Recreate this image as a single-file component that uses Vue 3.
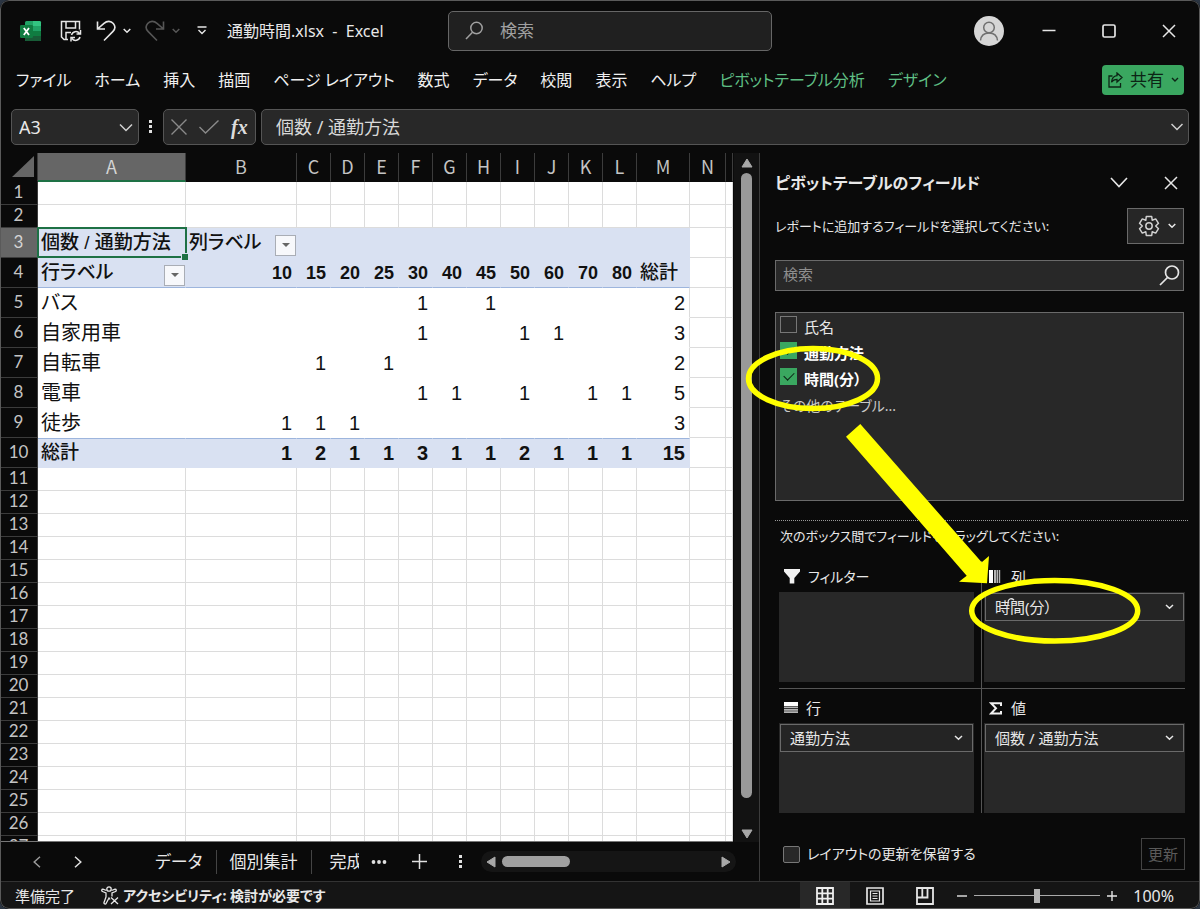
<script setup>
const tabs = [
  'ファイル', 'ホーム', '挿入', '描画', 'ページ レイアウト', '数式', 'データ', '校閲', '表示', 'ヘルプ',
]
const contextTabs = ['ピボットテーブル分析', 'デザイン']

const columns = ['A', 'B', 'C', 'D', 'E', 'F', 'G', 'H', 'I', 'J', 'K', 'L', 'M', 'N']

const minutes = [10, 15, 20, 25, 30, 40, 45, 50, 60, 70, 80]
const records = [
  { row: 5, name: 'バス', counts: { 30: 1, 45: 1 }, total: 2 },
  { row: 6, name: '自家用車', counts: { 30: 1, 50: 1, 60: 1 }, total: 3 },
  { row: 7, name: '自転車', counts: { 15: 1, 25: 1 }, total: 2 },
  { row: 8, name: '電車', counts: { 30: 1, 40: 1, 50: 1, 70: 1, 80: 1 }, total: 5 },
  { row: 9, name: '徒歩', counts: { 10: 1, 15: 1, 20: 1 }, total: 3 },
]
const totals = [1, 2, 1, 1, 3, 1, 1, 2, 1, 1, 1]
const emptyRows = Array.from({ length: 17 }, (_, i) => i + 11)

const fields = [
  { name: '氏名', on: false },
  { name: '通勤方法', on: true },
  { name: '時間(分）', on: true },
]
</script>

<template>
  <div class="window">
    <header class="titlebar">
      <div class="quick">
        <svg class="logo" width="22" height="22" viewBox="0 0 22 22">
          <rect x="5" y="1" width="16" height="20" rx="1.5" fill="#21a366" />
          <path d="M13 1h6.500a1.500 1.500 0 0 1 1.500 1.500V6h-8z" fill="#33c481" />
          <path d="M5 11h8v5H5z" fill="#185c37" />
          <path d="M13 11h8v5h-8z" fill="#107c41" />
          <path d="M5 16h16v3.500a1.500 1.500 0 0 1-1.500 1.500h-13A1.500 1.500 0 0 1 5 19.500z" fill="#185c37" />
          <rect x="0" y="5" width="13" height="13" rx="1.300" fill="#107c41" />
          <path d="M3.800 8l5.200 7M9 8l-5.200 7" stroke="#fff" stroke-width="1.800" />
        </svg>
        <button class="icon-btn save" aria-label="上書き保存">
          <svg width="22" height="22" viewBox="0 0 22 22" fill="none" stroke="#e6e6e6" stroke-width="1.500">
            <path d="M8 19.500H4L1.500 17V1.500h18v8M6 1.500v6.500h9.500V1.500M6 19v-6.500h5" />
            <path d="M11.500 15a4.500 4.500 0 0 1 8-1.500M20.500 10v4h-4M20 17a4.500 4.500 0 0 1-8 1.500M11 21.500v-4h4" />
          </svg>
        </button>
        <button class="icon-btn undo" aria-label="元に戻す">
          <svg width="20" height="22" viewBox="0 0 20 22" fill="none" stroke="#e6e6e6" stroke-width="1.600">
            <path d="M1.500 1.500v7.500h7.500M1.500 9L8 3.300C11 .7 15 .8 17.300 3.500c2 2.400 2 5.500-.3 7.900L8 20.500" />
          </svg>
          <svg width="8" height="6" viewBox="0 0 8 6" fill="none" stroke="#e6e6e6" stroke-width="1.500"><path d="M.700 1L4 4.300 7.300 1" /></svg>
        </button>
        <button class="icon-btn redo" aria-label="やり直し">
          <svg width="20" height="22" viewBox="0 0 20 22" fill="none" stroke="#565656" stroke-width="1.600">
            <path d="M18.500 1.500v7.500H11M18.500 9L12 3.300C9 .7 5 .8 2.700 3.500c-2 2.400-2 5.500.3 7.900L12 20.500" />
          </svg>
          <svg width="8" height="6" viewBox="0 0 8 6" fill="none" stroke="#565656" stroke-width="1.500"><path d="M.700 1L4 4.300 7.300 1" /></svg>
        </button>
        <button class="icon-btn" aria-label="クイック アクセス ツール バーのユーザー設定">
          <svg width="10" height="9" viewBox="0 0 10 9" fill="none" stroke="#e6e6e6" stroke-width="1.400"><path d="M.500 1h9M1.500 4L5 7.500 8.500 4" /></svg>
        </button>
        <span class="doc">通勤時間.xlsx&nbsp; -&nbsp; Excel</span>
      </div>
      <label class="search">
        <svg width="19" height="19" viewBox="0 0 19 19" fill="none" stroke="#a0a0a0" stroke-width="1.500"><circle cx="11.500" cy="7" r="5.700" /><path d="M7.500 11.300L1 18" /></svg>
        <input type="text" placeholder="検索" aria-label="検索" />
      </label>
      <div class="caption">
        <button class="icon-btn" aria-label="アカウント">
          <svg width="30" height="30" viewBox="0 0 30 30"><circle cx="15" cy="15" r="15" fill="#d6d6d6" /><g fill="none" stroke="#707070" stroke-width="1.500"><circle cx="15" cy="11.500" r="5.300" /><path d="M6.500 24.500c.5-5 4-7.500 8.500-7.500s8 2.500 8.500 7.500" /></g></svg>
        </button>
        <button class="icon-btn" aria-label="最小化"><svg width="14" height="14" viewBox="0 0 14 14"><path d="M.500 6.500h13" stroke="#e6e6e6" stroke-width="1.500" /></svg></button>
        <button class="icon-btn" aria-label="最大化"><svg width="14" height="14" viewBox="0 0 14 14"><rect x="1" y="1" width="12" height="12" rx="1.500" fill="none" stroke="#e6e6e6" stroke-width="1.700" /></svg></button>
        <button class="icon-btn" aria-label="閉じる"><svg width="14" height="14" viewBox="0 0 14 14"><path d="M1 1l12 12M13 1L1 13" stroke="#e6e6e6" stroke-width="1.500" /></svg></button>
      </div>
    </header>

    <nav class="ribbon">
      <button v-for="t in tabs" :key="t" class="tab">{{ t }}</button>
      <button v-for="t in contextTabs" :key="t" class="tab context">{{ t }}</button>
      <button class="share">
        <svg width="15" height="16" viewBox="0 0 15 16" fill="none" stroke="#0c2415" stroke-width="1.300"><path d="M4.500 4H1v11h11.500v-4M9 1l5 4.500L9 10V7.300c-2.500 0-4.200.7-5.500 3 .3-4 2.300-6.200 5.500-6.600z" /></svg>
        <span>共有</span>
        <svg width="8" height="6" viewBox="0 0 8 6" fill="none" stroke="#0c2415" stroke-width="1.400"><path d="M1 1l3 3 3-3" /></svg>
      </button>
    </nav>

    <div class="formula-row">
      <div class="field namebox">
        <input type="text" value="A3" aria-label="名前ボックス" />
        <button class="icon-btn" aria-label="名前の一覧"><svg width="14" height="9" viewBox="0 0 14 9" fill="none" stroke="#d0d0d0" stroke-width="1.500"><path d="M1 1.500l6 6 6-6" /></svg></button>
      </div>
      <svg class="grip" width="4" height="14" viewBox="0 0 4 14" fill="#e0e0e0"><path d="M0 0h3v3H0zM0 5h3v3H0zM0 10h3v3H0z" /></svg>
      <div class="field fx">
        <button class="icon-btn" aria-label="キャンセル"><svg width="16" height="16" viewBox="0 0 16 16"><path d="M.500.500l15 15M15.500.500l-15 15" stroke="#8a8a8a" stroke-width="1.400" /></svg></button>
        <button class="icon-btn" aria-label="入力"><svg width="20" height="14" viewBox="0 0 20 14"><path d="M.500 7l6 6L19.500.500" fill="none" stroke="#8a8a8a" stroke-width="1.400" /></svg></button>
        <button class="icon-btn fx-label" aria-label="関数の挿入">fx</button>
      </div>
      <div class="field formula">
        <input type="text" value="個数 / 通勤方法" aria-label="数式バー" />
        <button class="icon-btn" aria-label="数式バーの展開"><svg width="12" height="8" viewBox="0 0 12 8" fill="none" stroke="#d0d0d0" stroke-width="1.500"><path d="M.500 1L6 6.500 11.500 1" /></svg></button>
      </div>
    </div>

    <div class="body">
      <main class="sheet">
        <div class="sheet-view">
          <div class="grid-wrap">
            <table class="grid">
              <colgroup>
                <col class="w-head" /><col class="w-a" /><col class="w-b" />
                <col v-for="i in 10" :key="i" class="w-n" />
                <col class="w-m" /><col class="w-last" /><col />
              </colgroup>
              <thead>
                <tr>
                  <th class="corner"><svg width="22" height="21" viewBox="0 0 22 21"><path d="M22 0v21H0z" fill="#666" /></svg></th>
                  <th v-for="c in columns" :key="c" :class="{ active: c === 'A' }">{{ c }}</th>
                  <th></th>
                </tr>
              </thead>
              <tbody>
                <tr v-for="r in 2" :key="r" class="short"><th>{{ r }}</th><td v-for="c in 15" :key="c"></td></tr>
                <tr class="pivot head">
                  <th class="active">3</th>
                  <td class="selected">個数 / 通勤方法<i></i></td>
                  <td><div class="with-filter">列ラベル<button class="filter" aria-label="列ラベルの絞り込み"></button></div></td>
                  <td v-for="c in 11" :key="c"></td>
                  <td class="plain"></td><td class="plain"></td>
                </tr>
                <tr class="pivot head line">
                  <th>4</th>
                  <td><div class="with-filter">行ラベル<button class="filter" aria-label="行ラベルの絞り込み"></button></div></td>
                  <td v-for="m in minutes" :key="m" class="num">{{ m }}</td>
                  <td>総計</td>
                  <td class="plain"></td><td class="plain"></td>
                </tr>
                <tr v-for="r in records" :key="r.row" class="pivot">
                  <th>{{ r.row }}</th>
                  <td>{{ r.name }}</td>
                  <td v-for="m in minutes" :key="m" class="num">{{ r.counts[m] }}</td>
                  <td class="num">{{ r.total }}</td>
                  <td class="plain"></td><td class="plain"></td>
                </tr>
                <tr class="pivot total">
                  <th>10</th>
                  <td>総計</td>
                  <td v-for="(t, i) in totals" :key="i" class="num">{{ t }}</td>
                  <td class="num">15</td>
                  <td class="plain"></td><td class="plain"></td>
                </tr>
                <tr v-for="r in emptyRows" :key="r" class="short"><th>{{ r }}</th><td v-for="c in 15" :key="c"></td></tr>
              </tbody>
            </table>
          </div>
          <div class="vscroll">
            <svg width="12" height="10" viewBox="0 0 12 10"><path d="M6 1l5 8H1z" fill="#a8a8a8" stroke="#a8a8a8" stroke-linejoin="round" /></svg>
            <div class="thumb"></div>
            <svg width="12" height="10" viewBox="0 0 12 10"><path d="M6 9l5-8H1z" fill="#a8a8a8" stroke="#a8a8a8" stroke-linejoin="round" /></svg>
          </div>
        </div>
        <div class="sheet-tabs">
          <button class="icon-btn prev" aria-label="前のシート"><svg width="8" height="12" viewBox="0 0 8 12" fill="none" stroke="#9a9a9a" stroke-width="1.500"><path d="M7 .700L1.200 6 7 11.300" /></svg></button>
          <button class="icon-btn next" aria-label="次のシート"><svg width="8" height="12" viewBox="0 0 8 12" fill="none" stroke="#e0e0e0" stroke-width="1.500"><path d="M1 .700L6.800 6 1 11.300" /></svg></button>
          <button class="sheet-tab">データ</button>
          <button class="sheet-tab">個別集計</button>
          <button class="sheet-tab cut">完成</button>
          <button class="icon-btn" aria-label="その他のシート"><svg width="16" height="4" viewBox="0 0 16 4" fill="#e0e0e0"><circle cx="2.500" cy="2" r="1.900" /><circle cx="8" cy="2" r="1.900" /><circle cx="13.500" cy="2" r="1.900" /></svg></button>
          <button class="icon-btn add" aria-label="新しいシート"><svg width="15" height="15" viewBox="0 0 15 15"><path d="M7.500 0v15M0 7.500h15" stroke="#e0e0e0" stroke-width="1.500" /></svg></button>
          <svg class="split" width="4" height="14" viewBox="0 0 4 14" fill="#e0e0e0"><path d="M0 0h3v3H0zM0 5h3v3H0zM0 10h3v3H0z" /></svg>
          <div class="hscroll">
            <svg width="10" height="12" viewBox="0 0 10 12"><path d="M1 6l8-5v10z" fill="#a8a8a8" stroke="#a8a8a8" stroke-linejoin="round" /></svg>
            <div class="thumb"></div>
            <svg width="10" height="12" viewBox="0 0 10 12"><path d="M9 6L1 1v10z" fill="#a8a8a8" stroke="#a8a8a8" stroke-linejoin="round" /></svg>
          </div>
        </div>
      </main>

      <aside class="panel">
        <div class="panel-title">
          <h2>ピボットテーブルのフィールド</h2>
          <button class="icon-btn" aria-label="作業ウィンドウのオプション"><svg width="18" height="11" viewBox="0 0 18 11" fill="none" stroke="#e6e6e6" stroke-width="1.600"><path d="M1 1l8 8.500L17 1" /></svg></button>
          <button class="icon-btn" aria-label="閉じる"><svg width="14" height="14" viewBox="0 0 14 14"><path d="M1 1l12 12M13 1L1 13" stroke="#e6e6e6" stroke-width="1.500" /></svg></button>
        </div>
        <div class="panel-hint">
          <span>レポートに追加するフィールドを選択してください:</span>
          <button class="gear" aria-label="ツール">
            <svg width="22" height="22" viewBox="0 0 22 22" fill="none" stroke="#d0d0d0" stroke-width="1.500" stroke-linejoin="round">
              <path d="M7.800 5.200L8.300 1.500h5.400L14.200 5.200l3.500-1.300 2.800 4.400L17.700 11l2.800 2.700-2.800 4.400L14.200 16.800l-.5 3.700H8.300L7.800 16.800l-3.500 1.300-2.800-4.400L4.300 11 1.500 8.300l2.800-4.400z" />
              <circle cx="11" cy="11" r="3.200" />
            </svg>
            <svg width="8" height="6" viewBox="0 0 8 6" fill="none" stroke="#e6e6e6" stroke-width="1.500"><path d="M.700 1L4 4.300 7.300 1" /></svg>
          </button>
        </div>
        <label class="panel-search">
          <input type="text" placeholder="検索" aria-label="フィールドの検索" />
          <svg width="21" height="21" viewBox="0 0 21 21" fill="none" stroke="#e6e6e6" stroke-width="1.700"><circle cx="13" cy="7.500" r="6.500" /><path d="M8.500 12.500L1 20" /></svg>
        </label>
        <div class="field-list">
          <label v-for="f in fields" :key="f.name" :class="{ on: f.on }">
            <input type="checkbox" :checked="f.on" /><span>{{ f.name }}</span>
          </label>
          <a href="#">その他のテーブル...</a>
        </div>
        <p class="drag-hint">次のボックス間でフィールドをドラッグしてください:</p>
        <div class="areas">
          <section>
            <h3><svg width="16" height="15" viewBox="0 0 16 15"><path d="M0 0h16v2.500L10.300 9v5.500H5.700V9L0 2.500z" fill="#f2f2f2" /></svg><span class="kana">フィルター</span></h3>
            <div class="box"></div>
          </section>
          <section>
            <h3><svg width="14" height="13" viewBox="0 0 14 13"><path d="M0 0h4v13H0z" fill="#fff" /><path d="M5 0h2v13H5zM7.500 0h1.500v13H7.500zM9.700 0h1.500v13H9.700z" fill="#b5b5b5" /></svg>列</h3>
            <div class="box"><button class="chip">時間(分）<svg width="9" height="6" viewBox="0 0 9 6" fill="none" stroke="#e6e6e6" stroke-width="1.500"><path d="M1 1l3.500 3.300L8 1" /></svg></button></div>
          </section>
          <section>
            <h3><svg width="14" height="12" viewBox="0 0 14 12"><path d="M0 0h14v4H0z" fill="#fff" /><path d="M0 4.500h14v1.800H0zM0 6.900h14v1.800H0zM0 9.300h14v1.800H0z" fill="#b5b5b5" /></svg>行</h3>
            <div class="box"><button class="chip">通勤方法<svg width="9" height="6" viewBox="0 0 9 6" fill="none" stroke="#e6e6e6" stroke-width="1.500"><path d="M1 1l3.500 3.300L8 1" /></svg></button></div>
          </section>
          <section>
            <h3><svg width="14" height="13" viewBox="0 0 14 13" fill="none" stroke="#f2f2f2" stroke-width="2"><path d="M12 4V1.200H2l5 5-5 5.400h10V9" /></svg>値</h3>
            <div class="box"><button class="chip">個数 / 通勤方法<svg width="9" height="6" viewBox="0 0 9 6" fill="none" stroke="#e6e6e6" stroke-width="1.500"><path d="M1 1l3.500 3.300L8 1" /></svg></button></div>
          </section>
        </div>
        <div class="defer">
          <label><input type="checkbox" /><span class="kana">レイアウトの更新を保留する</span></label>
          <button class="update" disabled>更新</button>
        </div>
        <svg class="callout" width="440" height="728" viewBox="760 153 440 728" fill="none">
          <path d="M1014 600c-3-2.500-6-1-6 2.500v3" stroke="#e6e6e6" stroke-width="1.300" />
          <ellipse cx="813" cy="378.500" rx="64.500" ry="30" stroke="#ffff00" stroke-width="5.500" />
          <ellipse cx="1054.700" cy="610.700" rx="83" ry="30.300" stroke="#ffff00" stroke-width="5.500" />
          <path d="M846 436.700L860.300 424 981.700 562.300 989 556l-2 27.300-28-1.600 7.700-6z" fill="#ffff00" />
        </svg>
      </aside>
    </div>

    <footer class="status">
      <span>準備完了</span>
      <button class="access">
        <svg width="18" height="19" viewBox="0 0 18 19" fill="none" stroke="#e6e6e6" stroke-width="1.300"><circle cx="8" cy="3" r="2.200" /><path d="M5.500 4.500L2 3.200C.500 3 .300 5 1.500 5.500L5 7v4l-2 5.500c-.3 1.500 1.500 2 2.200.8L8 12l1 1.500M10.500 4.500l3.500-1.300c1.500-.2 1.700 1.800.5 2.300L11 7v3.500M10 11.500l7 6.500M17 11.500L10 18" /></svg>
        アクセシビリティ: 検討が必要です
      </button>
      <div class="views">
        <button class="view current" aria-label="標準"><svg width="18" height="18" viewBox="0 0 18 18" fill="none" stroke="#f0f0f0" stroke-width="1.800"><path d="M1 1h16v16H1zM6.300 1v16M11.700 1v16M1 6.300h16M1 11.700h16" /></svg></button>
        <button class="view" aria-label="ページ レイアウト"><svg width="18" height="18" viewBox="0 0 18 18" fill="none" stroke="#e6e6e6" stroke-width="1.700"><path d="M1 1h16v16H1z" /><path d="M4.500 4h9v10h-9zM6.500 6.500h5M6.500 9h5M6.500 11.500h5" stroke-width="1.200" /></svg></button>
        <button class="view" aria-label="改ページ プレビュー"><svg width="18" height="18" viewBox="0 0 18 18" fill="none" stroke="#e6e6e6" stroke-width="1.800"><path d="M1 1h16v16H1zM1 10.500h10.500V1M6.300 1v9.500" /></svg></button>
      </div>
      <div class="zoom">
        <button class="icon-btn" aria-label="縮小"><svg width="10" height="10" viewBox="0 0 10 10"><path d="M0 5h10" stroke="#e6e6e6" stroke-width="1.400" /></svg></button>
        <input type="range" min="0" max="100" value="50" aria-label="ズーム" />
        <button class="icon-btn" aria-label="拡大"><svg width="10" height="10" viewBox="0 0 10 10"><path d="M0 5h10M5 0v10" stroke="#e6e6e6" stroke-width="1.400" /></svg></button>
        <span>100%</span>
      </div>
    </footer>
  </div>
</template>

<style>
body {
  background: #2b3542;
}
</style>

<style scoped>
* {
  box-sizing: border-box;
}
.window {
  position: relative;
  display: flex;
  flex-direction: column;
  height: 100vh;
  overflow: hidden;
  border-radius: 9px;
  background: #0a0a0a;
  color: #e8e8e8;
  font: 16px/20px "Noto Sans", "Noto Sans CJK JP", sans-serif;
  font-feature-settings: "palt";
}
.window::after {
  content: "";
  position: absolute;
  inset: 0;
  z-index: 5;
  border: 1px solid #5a5a5a;
  border-radius: 9px;
  pointer-events: none;
}
button,
input {
  margin: 0;
  padding: 0;
  border: 0;
  background: none;
  color: inherit;
  font: inherit;
  font-feature-settings: inherit;
}
input[type="text"] {
  min-width: 0;
  flex: 1;
  outline: none;
}
svg {
  display: block;
  flex: none;
}
.icon-btn {
  display: flex;
  align-items: center;
  flex: none;
}

.titlebar {
  display: grid;
  grid-template-columns: 1.06fr 324px 1fr;
  align-items: center;
  flex: none;
  height: 61px;
  padding: 0 24px 0 20px;
}
.quick {
  display: flex;
  align-items: center;
  white-space: nowrap;
}
.save {
  margin-left: 18px;
}
.undo,
.redo {
  gap: 7px;
  margin-left: 14px;
}
.redo + .icon-btn {
  margin-left: 17px;
}
.doc {
  margin-left: 20px;
  font-size: 16px;
}
.search {
  display: flex;
  align-items: center;
  gap: 16px;
  height: 40px;
  padding: 0 16px;
  border: 1px solid #666;
  border-radius: 5px;
  background: #202020;
}
.search input {
  font-size: 17px;
}
.search input::placeholder {
  color: #a0a0a0;
  opacity: 1;
}
.caption {
  display: flex;
  align-items: center;
  justify-content: flex-end;
  gap: 46px;
}
.caption .icon-btn:first-child {
  margin-right: -8px;
}

.ribbon {
  display: flex;
  align-items: center;
  gap: 23px;
  flex: none;
  height: 38px;
  margin-bottom: 2px;
  padding: 0 16px;
  white-space: nowrap;
}
.tab {
  color: #f0f0f0;
  font-size: 16px;
}
.tab.context {
  color: #5fbf84;
}
.share {
  display: flex;
  align-items: center;
  gap: 7px;
  height: 30px;
  margin-left: auto;
  padding: 0 5px 0 6px;
  border-radius: 4px;
  background: #3aa760;
  color: #0c2415;
  font-size: 17px;
}

.formula-row {
  display: flex;
  align-items: center;
  flex: none;
  height: 52px;
  padding: 0 11px;
}
.field {
  display: flex;
  align-items: center;
  height: 36px;
  border: 1px solid #555;
  border-radius: 5px;
  background: #282828;
}
.namebox {
  width: 128px;
  padding: 0 5px 0 7px;
  font-size: 18px;
}
.grip {
  margin: 0 10px;
}
.fx {
  gap: 12px;
  width: 93px;
  margin-right: 5px;
  padding: 0 6px 0 7px;
}
.fx-label {
  color: #dcdcdc;
  font: italic bold 20px/24px "Liberation Serif", serif;
}
.formula {
  flex: 1;
  padding: 0 5px 0 14px;
  color: #d8d8d8;
  font-size: 18px;
}

.body {
  display: flex;
  flex: 1;
  min-height: 0;
}
.sheet {
  display: flex;
  flex: 1;
  flex-direction: column;
  min-width: 0;
}
.sheet-view {
  display: flex;
  flex: 1;
  min-height: 0;
}
.grid-wrap {
  flex: 1;
  min-width: 0;
  overflow: hidden;
  border-bottom: 1px solid #777;
  background: #fff;
}
.grid {
  width: 100%;
  border-spacing: 0;
  table-layout: fixed;
  color: #111;
  font-family: "Liberation Sans", "Noto Sans CJK JP", sans-serif;
  font-size: 20px;
  line-height: 22px;
  white-space: nowrap;
}
.w-head { width: 38px; }
.w-a { width: 148px; }
.w-b { width: 111px; }
.w-n { width: 34px; }
.w-m { width: 53px; }
.w-last { width: 36px; }
.grid th {
  padding: 0 0 1px;
  border-right: 1px solid #3c3c3c;
  border-bottom: 1px solid #3c3c3c;
  background: #0a0a0a;
  color: #c4c4c4;
  font-family: Lato, sans-serif;
  font-size: 17px;
  font-weight: 400;
  line-height: 20px;
}
.grid thead th {
  height: 29px;
  padding-bottom: 2px;
  border-bottom-color: #0a0a0a;
  font-family: "Noto Sans CJK JP", sans-serif;
  font-size: 18px;
}
.grid th.active {
  background: #666;
  color: #d5d5d5;
}
.grid thead th.active {
  border-bottom: 2px solid #1e7145;
}
.grid .corner svg {
  margin-left: 12px;
}
.grid td {
  height: 30px;
  padding: 0 3px;
  border-right: 1px solid #dcdcdc;
  border-bottom: 1px solid #dcdcdc;
}
.grid .short td {
  height: 23px;
}
.grid .short th {
  height: 23px;
  padding-bottom: 2px;
}
.pivot td:not(.plain) {
  border-color: transparent;
}
.pivot:not(.head):not(.total) td:nth-last-child(3) {
  border-right-color: #dcdcdc;
}
.grid .pivot td.num {
  padding-right: 4px;
  text-align: right;
}
.pivot.head td:not(.plain),
.pivot.total td:not(.plain) {
  border-color: #d9e1f2;
  background: #d9e1f2;
  font-size: 19px;
  font-weight: 500;
}
.grid .pivot.line td:not(.plain) {
  border-bottom-color: #9db5dd;
}
.grid .pivot.total td:not(.plain) {
  border-top: 1px solid #9db5dd;
}
.grid .pivot.head td.num {
  font-size: 18px;
  font-weight: 700;
}
.grid .pivot.total td.num {
  font-size: 20px;
  font-weight: 700;
}
.selected {
  position: relative;
}
.selected::after {
  content: "";
  position: absolute;
  inset: -1px -2px -1px -1px;
  border: 2px solid #1e7145;
}
.selected i {
  position: absolute;
  right: -3px;
  bottom: -3px;
  z-index: 1;
  width: 6px;
  height: 6px;
  background: #1e7145;
  outline: 1px solid #d9e1f2;
}
.with-filter {
  display: flex;
  align-items: center;
  justify-content: space-between;
  margin-right: -3px;
}
.filter {
  display: flex;
  align-items: center;
  justify-content: center;
  width: 21px;
  height: 21px;
  margin-top: 5px;
  border: 1px solid #a9adb5;
  background: #f7f8fb;
}
.filter::after {
  content: "";
  border: 4px solid transparent;
  border-top: 4px solid #666;
  border-bottom: 0;
}

.vscroll {
  display: flex;
  flex: none;
  flex-direction: column;
  align-items: center;
  gap: 5px;
  width: 26px;
  padding: 5px 0 3px;
  border-left: 1px solid #0a0a0a;
  background: #121212;
}
.vscroll .thumb {
  flex: 1;
  width: 11px;
  margin-bottom: 26px;
  border-radius: 6px;
  background: #999;
}
.sheet-tabs {
  display: flex;
  align-items: center;
  flex: none;
  height: 39px;
  padding: 0 23px 0 33px;
  font-size: 17px;
}
.next {
  margin-left: 33px;
}
.sheet-tab {
  height: 24px;
  padding: 0 13px;
  border-right: 1px solid #444;
  line-height: 24px;
  white-space: nowrap;
}
.next + .sheet-tab {
  margin-left: 60px;
}
.sheet-tab.cut {
  width: 47px;
  margin-right: 12px;
  padding: 0 0 0 18px;
  border: 0;
  overflow: hidden;
}
.add {
  margin: 0 32px 0 25px;
}
.split {
  margin-right: 18px;
}
.hscroll {
  display: flex;
  align-items: center;
  gap: 6px;
  flex: 1;
  height: 21px;
  padding: 0 5px;
  border-radius: 11px;
  background: #151515;
}
.hscroll .thumb {
  width: 68px;
  height: 11px;
  margin-right: auto;
  border-radius: 6px;
  background: #a0a0a0;
}

.panel {
  position: relative;
  display: flex;
  flex: 0 0 441px;
  flex-direction: column;
  padding: 0 16px 0 15px;
  border-left: 1px solid #3c3c3c;
  font-size: 15px;
}
.panel-title {
  display: flex;
  align-items: center;
  height: 55px;
  padding: 4px 6px 0 0;
}
h2,
h3,
p {
  margin: 0;
}
.panel-title h2 {
  flex: 1;
  font-size: 16px;
  font-weight: 700;
}
.panel-title .icon-btn + .icon-btn {
  margin-left: 36px;
}
.panel-hint {
  display: flex;
  align-items: center;
  justify-content: space-between;
  height: 36px;
  font-size: 13px;
  white-space: nowrap;
}
.gear {
  display: flex;
  align-items: center;
  gap: 8px;
  height: 36px;
  padding: 0 7px 0 10px;
  border: 1px solid #6a6a6a;
  background: #262626;
}
.panel-search {
  display: flex;
  align-items: center;
  height: 31px;
  margin-top: 16px;
  padding: 0 3px 0 7px;
  border: 1px solid #6a6a6a;
  background: #282828;
}
.panel-search input {
  padding-bottom: 4px;
}
.panel-search input::placeholder {
  color: #8f8f8f;
  opacity: 1;
}
.field-list {
  display: flex;
  flex-direction: column;
  height: 189px;
  margin: 21px 0 1px;
  padding: 1px 4px;
  border: 1px solid #6a6a6a;
  background: #282828;
}
.field-list label {
  display: flex;
  gap: 7px;
  height: 26px;
  line-height: 26px;
}
.field-list label.on {
  color: #fff;
  font-weight: 700;
}
.field-list a {
  color: #c8c8c8;
  font-size: 14px;
  line-height: 28px;
  text-decoration: none;
}
.kana {
  font-size: 14px;
}
input[type="checkbox"] {
  appearance: none;
  flex: none;
  width: 17px;
  height: 17px;
  border: 1px solid #777;
  background: #282828;
}
.field-list input[type="checkbox"] {
  margin-top: 2px;
}
input[type="checkbox"]:checked {
  display: flex;
  justify-content: center;
  border-color: #3aa760;
  background: #3aa760;
}
input[type="checkbox"]:checked::after {
  content: "";
  width: 5px;
  height: 9px;
  margin-top: 1px;
  border: solid #0c2415;
  border-width: 0 1px 1px 0;
  transform: rotate(45deg);
}
.drag-hint {
  margin: 18px -4px 0 0;
  padding: 5px 0 0 5px;
  border-top: 1px dotted #999;
  font-size: 13px;
  white-space: nowrap;
}
.areas {
  display: grid;
  grid-template-columns: 202px 1fr;
  margin: 15px -1px 0 4px;
}
.areas section {
  padding-right: 7px;
}
.areas section:nth-child(even) {
  padding: 0 0 0 2px;
  border-left: 1px solid #555;
}
.areas section:nth-child(n + 3) {
  border-top: 1px solid #555;
}
.areas h3 {
  display: flex;
  align-items: center;
  gap: 8px;
  height: 31px;
  padding: 0 0 0 5px;
  font-size: 15px;
  font-weight: 400;
}
.areas section:nth-child(n + 3) h3 {
  height: 34px;
  padding-top: 4px;
}
.box {
  height: 90px;
  margin-bottom: 6px;
  padding: 1px;
  background: #282828;
}
.areas section:nth-child(n + 3) .box {
  margin-bottom: 0;
}
.chip {
  display: flex;
  align-items: center;
  justify-content: space-between;
  width: 100%;
  height: 28px;
  padding: 0 9px;
  border: 1px solid #6a6a6a;
  background: #242424;
}
.defer {
  display: flex;
  align-items: center;
  justify-content: space-between;
  height: 32px;
  margin: auto -1px 11px 8px;
}
.defer label {
  display: flex;
  align-items: center;
  gap: 7px;
}
.defer input[type="checkbox"] {
  border-radius: 2px;
}
.update {
  height: 32px;
  padding: 0 6px;
  border: 1px solid #444;
  color: #5a5a5a;
}
.callout {
  position: absolute;
  top: 0;
  left: 0;
  overflow: visible;
  pointer-events: none;
}

.status {
  display: flex;
  align-items: center;
  flex: none;
  height: 28px;
  padding: 0 26px 0 15px;
  border-top: 1px solid #333;
  background: #151515;
  font-size: 15px;
  white-space: nowrap;
}
.access {
  display: flex;
  align-items: center;
  gap: 4px;
  margin-left: 26px;
  font-size: 14px;
  font-weight: 700;
}
.views {
  display: flex;
  align-self: stretch;
  margin-left: auto;
}
.view {
  display: flex;
  align-items: center;
  justify-content: center;
  width: 50px;
}
.view.current {
  background: #282828;
}
.zoom {
  display: flex;
  align-items: center;
  gap: 7px;
  margin-left: 7px;
  font-size: 16px;
}
.zoom span {
  margin-left: 9px;
}
.zoom input {
  appearance: none;
  width: 126px;
  height: 16px;
  background: linear-gradient(#aaa, #aaa) center / 100% 1px no-repeat;
}
.zoom input::-webkit-slider-thumb {
  appearance: none;
  width: 6px;
  height: 14px;
  background: #b5b5b5;
}
</style>
